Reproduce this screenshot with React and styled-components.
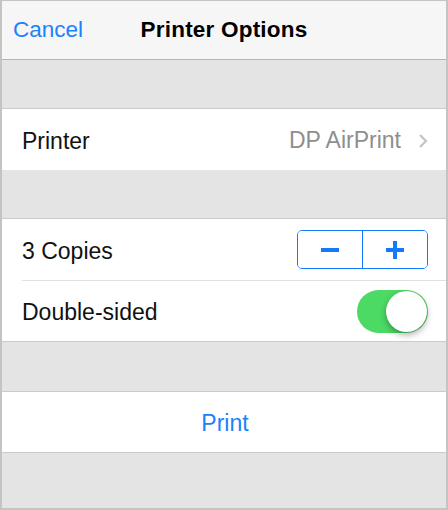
import React, {useState} from "react";
import styled, {createGlobalStyle} from "styled-components";

const GlobalStyle = createGlobalStyle`
    html, body {
        margin: 0;
        padding: 0;
        background: #ffffff;
    }
    body {
        font-family: "Liberation Sans", Arial, sans-serif;
        -webkit-font-smoothing: antialiased;
    }
`;

const Frame = styled.div`
    width: 448px;
    height: 510px;
    box-sizing: border-box;
    border-style: solid;
    border-color: #c4c4c4;
    border-width: 1px 2px 2px 2px;
    background: #e4e4e4;
    display: flex;
    flex-direction: column;
    overflow: hidden;
`;

const NavBar = styled.header`
    height: 58px;
    flex-shrink: 0;
    background: #f6f6f6;
    border-bottom: 1px solid #b4b4b4;
    display: grid;
    grid-template-columns: 1fr auto 1fr;
    align-items: center;
    padding: 0 11px;
`;

const NavButton = styled.button`
    justify-self: start;
    background: none;
    border: none;
    padding: 0;
    font: inherit;
    font-size: 22.5px;
    color: #1a82fb;
    cursor: pointer;
`;

const Title = styled.h1`
    margin: 0;
    font-size: 22.5px;
    font-weight: bold;
    color: #000;
    letter-spacing: 0.2px;
`;

const Spacer = styled.div`
    height: ${p => p.$h}px;
    flex-shrink: 0;
    ${p => p.$grow && "flex: 1;"}
`;

const Group = styled.section`
    background: #ffffff;
    border-top: 1px solid #cbcbcb;
    border-bottom: ${p => p.$noBottom ? "none" : "1px solid #cbcbcb"};
    flex-shrink: 0;
`;

const Row = styled.div`
    height: ${p => p.$h || 61}px;
    box-sizing: border-box;
    display: flex;
    align-items: center;
    justify-content: ${p => p.$center ? "center" : "space-between"};
    padding: 0 18px 0 20px;
    position: relative;
    ${p => p.$separator && `
        border-bottom: 1px solid transparent;
        &::after {
            content: "";
            position: absolute;
            left: 20px;
            right: 0;
            bottom: -1px;
            height: 1px;
            background: #e0e0e0;
        }
    `}
`;

const Label = styled.span`
    font-size: 23px;
    color: #111;
    padding-top: 3px;
`;

const Detail = styled.span`
    display: flex;
    align-items: center;
    gap: 17px;
    font-size: 23px;
    color: #8e8e8e;
    padding-top: 2px;
`;

const ActionText = styled.span`
    font-size: 23px;
    color: #1a82fb;
    cursor: pointer;
    padding-top: 2px;
`;

const Stepper = styled.div`
    display: flex;
    width: 131px;
    height: 39px;
    box-sizing: border-box;
    border: 1px solid #137bf9;
    border-radius: 5px;
    overflow: hidden;
`;

const StepButton = styled.button`
    flex: 1;
    border: none;
    background: #fff;
    padding: 0;
    display: flex;
    align-items: center;
    justify-content: center;
    cursor: pointer;
    & + & {
        border-left: 1px solid #137bf9;
    }
`;

const Switch = styled.button`
    width: 71px;
    height: 43px;
    border-radius: 22px;
    border: none;
    padding: 0;
    background: ${p => p.$on ? "#4cd964" : "#e5e5ea"};
    position: relative;
    cursor: pointer;
`;

const Knob = styled.span`
    position: absolute;
    top: 1px;
    left: ${p => p.$on ? "29px" : "1px"};
    width: 41px;
    height: 41px;
    border-radius: 50%;
    background: #fff;
    box-shadow: 0 3px 6px rgba(0, 0, 0, 0.3), 0 0 1px rgba(0, 0, 0, 0.25);
`;

function Chevron() {
    return (
        <svg width="10" height="16" viewBox="0 0 10 16">
            <polyline points="2,2 8,8 2,14" fill="none" stroke="#c3c3c8" strokeWidth="2.2" />
        </svg>
    );
}

function Minus() {
    return (
        <svg width="20" height="20" viewBox="0 0 20 20">
            <rect x="1" y="8" width="18" height="4" fill="#137bf9" />
        </svg>
    );
}

function Plus() {
    return (
        <svg width="20" height="20" viewBox="0 0 20 20">
            <rect x="1" y="8" width="18" height="4" fill="#137bf9" />
            <rect x="8" y="1" width="4" height="18" fill="#137bf9" />
        </svg>
    );
}

export default function App() {
    const [copies, setCopies] = useState(3);
    const [duplex, setDuplex] = useState(true);

    return (
        <Frame>
            <GlobalStyle />
            <NavBar>
                <NavButton>Cancel</NavButton>
                <Title>Printer Options</Title>
                <span />
            </NavBar>

            <Spacer $h={48} />
            <Group $noBottom>
                <Row>
                    <Label>Printer</Label>
                    <Detail>
                        DP AirPrint
                        <Chevron />
                    </Detail>
                </Row>
            </Group>

            <Spacer $h={48} />
            <Group>
                <Row $h={62} $separator>
                    <Label>{copies} Copies</Label>
                    <Stepper>
                        <StepButton onClick={() => setCopies(Math.max(1, copies - 1))}><Minus /></StepButton>
                        <StepButton onClick={() => setCopies(copies + 1)}><Plus /></StepButton>
                    </Stepper>
                </Row>
                <Row $h={60}>
                    <Label>Double-sided</Label>
                    <Switch $on={duplex} onClick={() => setDuplex(!duplex)}>
                        <Knob $on={duplex} />
                    </Switch>
                </Row>
            </Group>

            <Spacer $h={49} />
            <Group>
                <Row $h={60} $center>
                    <ActionText>Print</ActionText>
                </Row>
            </Group>
            <Spacer $grow />
        </Frame>
    );
}
